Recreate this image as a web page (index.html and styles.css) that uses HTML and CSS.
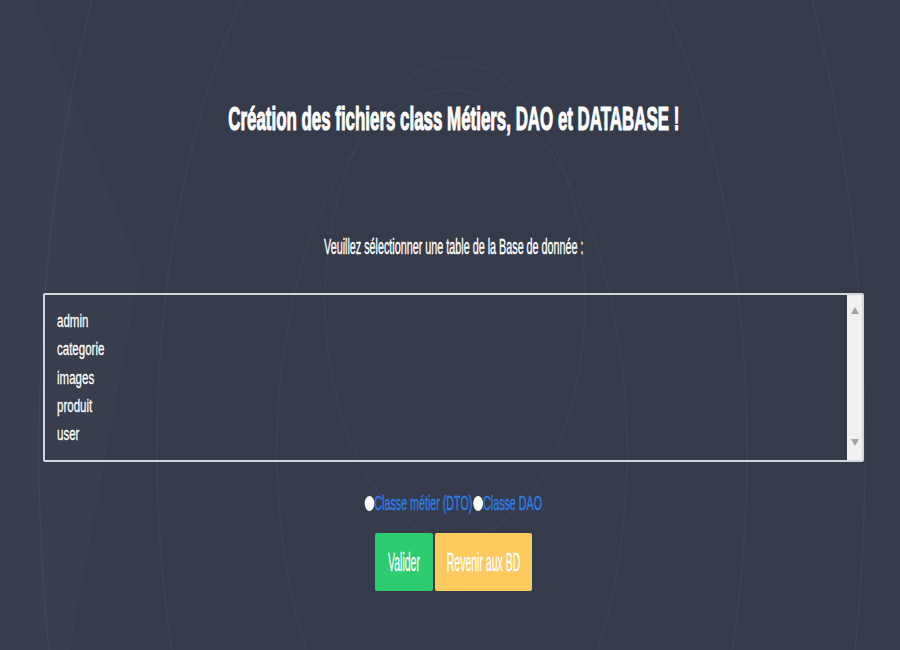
FILE: index.html
```html
<!DOCTYPE html>
<html lang="fr">
<head>
<meta charset="utf-8">
<title>Création des fichiers</title>
<link rel="stylesheet" href="styles.css">
</head>
<body>
<svg class="bg" width="900" height="650" viewBox="0 0 900 650" aria-hidden="true">
  <path d="M0 0 L33 0 L140 270 L70 650 L0 650 Z" fill="rgba(255,255,255,0.015)"/>
  <ellipse cx="452" cy="450" rx="413" ry="918" fill="none" stroke="rgba(255,255,255,0.045)" stroke-width="1.5"/>
  <ellipse cx="452" cy="450" rx="295" ry="641" fill="none" stroke="rgba(255,255,255,0.04)" stroke-width="1.5"/>
  <ellipse cx="452" cy="450" rx="175" ry="360" fill="none" stroke="rgba(255,255,255,0.03)" stroke-width="1.5"/>
  <ellipse cx="455" cy="300" rx="130" ry="238" fill="none" stroke="rgba(255,255,255,0.03)" stroke-width="1.5"/>
</svg>
<main class="page">
  <h1 class="title"><span class="cond">Création des fichiers class Métiers, DAO et DATABASE !</span></h1>
  <p class="prompt"><span class="cond">Veuillez sélectionner une table de la Base de donnée :</span></p>
  <div class="listbox">
    <ul class="options">
      <li><span class="cond-l">admin</span></li>
      <li><span class="cond-l">categorie</span></li>
      <li><span class="cond-l">images</span></li>
      <li><span class="cond-l">produit</span></li>
      <li><span class="cond-l">user</span></li>
    </ul>
    <div class="scrollbar">
      <span class="arrow up"></span>
      <span class="arrow down"></span>
    </div>
  </div>
  <div class="radios">
    <span class="cond"><span class="radio"></span><span class="rlabel">Classe métier (DTO)</span><span class="radio"></span><span class="rlabel">Classe DAO</span></span>
  </div>
  <div class="buttons">
    <button class="btn green"><span class="cond">Valider</span></button>
    <button class="btn yellow"><span class="cond">Revenir aux BD</span></button>
  </div>
</main>
</body>
</html>
```
FILE: styles.css
```css
html, body {
  margin: 0;
  padding: 0;
}
body {
  width: 900px;
  height: 650px;
  overflow: hidden;
  background: #353b4b;
  color: #ffffff;
  font-family: "Liberation Sans", Arial, sans-serif;
  position: relative;
}
.bg {
  position: absolute;
  left: 0;
  top: 0;
}
.page {
  position: relative;
  display: flex;
  flex-direction: column;
  align-items: center;
  padding: 96px 36px 0 43px;
}
.cond {
  display: inline-block;
  transform-origin: center;
  white-space: nowrap;
}
.cond-l {
  display: inline-block;
  transform: scaleX(0.64);
  transform-origin: left;
  white-space: nowrap;
  -webkit-text-stroke: 0.3px #ffffff;
}
.title {
  margin: 0;
  font-size: 34px;
  font-weight: bold;
  line-height: 44px;
  text-align: center;
}
.title .cond {
  transform: scaleX(0.497);
  -webkit-text-stroke: 1.2px #ffffff;
}
.prompt {
  margin: 94px 0 0;
  font-size: 22px;
  line-height: 26px;
  text-align: center;
}
.prompt .cond {
  transform: scaleX(0.49);
  -webkit-text-stroke: 0.4px #ffffff;
}
.listbox {
  margin-top: 33px;
  align-self: stretch;
  height: 165px;
  border: 2px solid #d3d6dc;
  border-radius: 2px;
  display: flex;
}
.options {
  list-style: none;
  margin: 0;
  padding: 12px 12px 8px;
  flex: 1;
}
.options li {
  font-size: 18px;
  line-height: 28.3px;
}
.scrollbar {
  width: 15px;
  background: #f1f1f1;
  display: flex;
  flex-direction: column;
  justify-content: space-between;
  align-items: center;
  padding: 12px 0 14px;
}
.arrow {
  width: 0;
  height: 0;
  border-left: 4px solid transparent;
  border-right: 4px solid transparent;
}
.arrow.up { border-bottom: 7px solid #a3a3a3; }
.arrow.down { border-top: 7px solid #a3a3a3; }
.radios {
  margin-top: 29px;
  font-size: 21px;
  line-height: 24px;
}
.radios .cond {
  transform: scaleX(0.51);
}
.radio {
  display: inline-block;
  width: 19px;
  height: 15px;
  border-radius: 50%;
  background: #ffffff;
  vertical-align: -1px;
}
.rlabel {
  color: #2e7ee8;
  -webkit-text-stroke: 0.4px #2e7ee8;
  margin-right: 2px;
}
.buttons {
  margin-top: 18px;
  display: flex;
  gap: 2px;
}
.btn {
  border: none;
  border-radius: 2px;
  height: 58px;
  color: #ffffff;
  font-family: inherit;
  font-size: 25px;
  padding: 0;
  display: flex;
  align-items: center;
  justify-content: center;
}
.btn .cond {
  transform: scaleX(0.42);
  -webkit-text-stroke: 0.3px #ffffff;
}
.btn.green {
  background: #2ecc71;
  width: 58px;
}
.btn.yellow {
  background: #fcca5f;
  width: 97px;
}
```
